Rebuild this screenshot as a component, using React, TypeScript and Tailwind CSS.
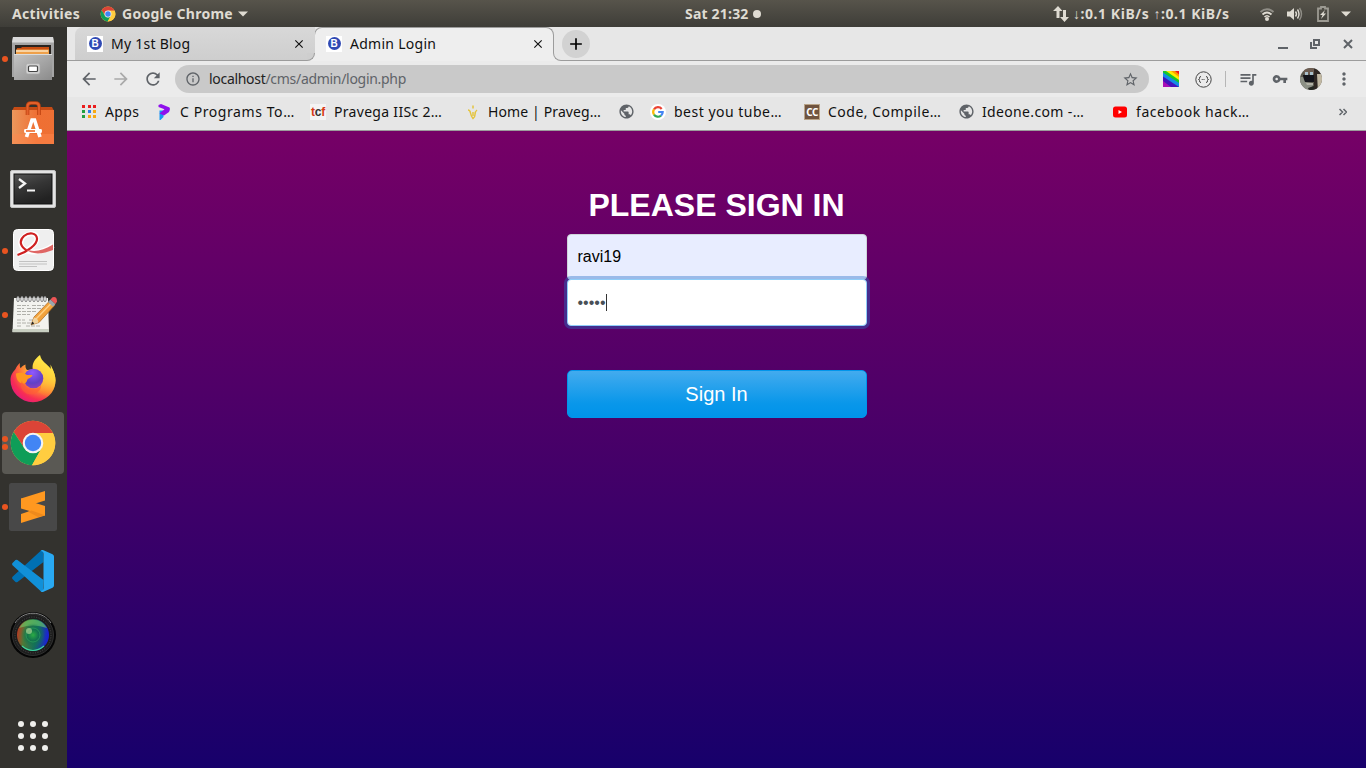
import React from "react";
import {
  MdArrowBack, MdArrowForward, MdRefresh, MdInfoOutline, MdStarBorder,
  MdQueueMusic, MdVpnKey, MdMoreVert, MdClose, MdAdd, MdPublic,
} from "react-icons/md";

const ui = "font-['Noto_Sans','Open_Sans',sans-serif]";

/* ---------- small shared drawings ---------- */

function ChromeLogo({ size }: { size: number }) {
  return (
    <svg width={size} height={size} viewBox="0 0 48 48" className="shrink-0">
      <circle cx="24" cy="24" r="22.3" fill="#ffcd40" />
      <path d="M4.700 12.900A22.300 22.300 0 0 1 43.300 12.900L44 14H24A10 10 0 0 0 15 28.500Z" fill="#db4437" />
      <path d="M4.700 12.900L15.300 29A10 10 0 0 0 32.700 29L23 46.300A22.300 22.300 0 0 1 4.700 12.900Z" fill="#0f9d58" />
      <path d="M24 14H43.900A22.300 22.300 0 0 1 23 46.300L32.700 29A10 10 0 0 0 24 14Z" fill="#ffcd40" />
      <circle cx="24" cy="24" r="10.3" fill="#f4f4f4" />
      <circle cx="24" cy="24" r="8.2" fill="#4285f4" />
    </svg>
  );
}

function BlogFavicon() {
  return (
    <span className="flex size-4 shrink-0 items-center justify-center bg-white">
      <span className="flex size-[13px] items-center justify-center rounded-full bg-[#304ab4] font-['Liberation_Sans',sans-serif] text-[10px] leading-none font-bold text-white">
        B
      </span>
    </span>
  );
}

function Globe() {
  return <MdPublic size={17} className="-mr-px shrink-0 text-[#5f6368]" />;
}

/* ---------- dock icons, each on a 48 × 48 canvas ---------- */

function FilesIcon() {
  return (
    <svg width="48" height="48" viewBox="0 0 48 48">
      <defs>
        <linearGradient id="fi" x2="1" y2="1"><stop stopColor="#c4c4c4" /><stop offset="1" stopColor="#8b8b8b" /></linearGradient>
      </defs>
      <path d="M4 2h40l1 6v34H3V8Z" fill="#a5a5a5" />
      <path d="M4 2h40l1 5.500H3Z" fill="#dadada" />
      <path d="M6 10h36v11H6Z" fill="#292420" />
      <path d="M8 13h4l1-1h27v8H7Z" fill="#c84e12" />
      <path d="M7 14.500h33V21H7Z" fill="#eea04a" />
      <path d="M7 16h32" stroke="#fff3dc" strokeWidth="1.200" />
      <path d="M5 19h38v26H5Z" fill="url(#fi)" />
      <path d="M5 19.500h38" stroke="#dcdcdc" />
      <rect x="17" y="28.500" width="14" height="10.500" rx="2" fill="#d0d0d0" stroke="#a8a8a8" strokeWidth=".6" />
      <rect x="19.500" y="31" width="9" height="5.500" rx="1" fill="#fff" stroke="#444" strokeWidth="1.200" />
    </svg>
  );
}

function SoftwareIcon() {
  return (
    <svg width="48" height="48" viewBox="0 0 48 48">
      <defs>
        <linearGradient id="sw" x2="1"><stop stopColor="#eb975c" /><stop offset=".6" stopColor="#ef6f33" /><stop offset="1" stopColor="#ee7034" /></linearGradient>
      </defs>
      <path d="M5 8h38l2 4H3Z" fill="#c54b15" />
      <path d="M3 11h42v34H3Z" fill="url(#sw)" />
      <path d="M3 35h42v10H3Z" fill="#ff8a50" opacity=".45" />
      <path d="M18.500 16V7.500Q18.500 4 22 4h4.500Q30 4 30 7.500V16" fill="none" stroke="#bd4210" strokeWidth="3.600" />
      <path d="M18.500 16V7.500Q18.500 4 22 4h4.500Q30 4 30 7.500V16" fill="none" stroke="#e3602a" strokeWidth="2" />
      <path d="M17.500 38 23 21h2.500L31 38M15.500 32h17" fill="none" stroke="#fff" strokeWidth="3.600" />
      <rect x="15" y="30" width="18" height="4" rx="2" fill="#fff" />
      <path d="M17 32h9" stroke="#ef7033" strokeWidth="1.700" />
    </svg>
  );
}

function TerminalIcon() {
  return (
    <svg width="48" height="48" viewBox="0 0 48 48">
      <defs>
        <linearGradient id="te" x2=".4" y2="1"><stop stopColor="#545454" /><stop offset=".5" stopColor="#353535" /><stop offset="1" stopColor="#222" /></linearGradient>
      </defs>
      <rect x="1.500" y="7.500" width="45" height="37" rx="1.500" fill="#e4e4e4" stroke="#c4c4c4" />
      <rect x="5" y="11" width="38" height="30" fill="url(#te)" stroke="#111" />
      <path d="m10 16 6 4.500-6 4.500" fill="none" stroke="#f4f4f4" strokeWidth="2.300" />
      <path d="M18 27.500h8" stroke="#f4f4f4" strokeWidth="2" />
    </svg>
  );
}

function PdfIcon() {
  return (
    <svg width="48" height="48" viewBox="0 0 48 48">
      <rect x="4.500" y="2.500" width="40" height="41" rx="4" fill="#efefef" stroke="#fff" />
      <path d="M9 27.500C18 24.500 28 17 28 11.500 28 6 20 5 15 9.500 9 15 12 22 20 24.500c8 1.500 17-1 24-6" fill="none" stroke="#fff" strokeWidth="5" />
      <path d="M8.500 28C18 25 28.500 17.500 28 11.500 27.500 5.500 20 5 15 9c-5.500 5-3.500 11 3 14.500" fill="none" stroke="#cf2020" strokeWidth="2.200" />
      <path d="M15.500 21.500c8 4.500 18 2.500 28.500-4v5.500c-10 4-21 5.500-28.500-1.500Z" fill="#dc5553" opacity=".9" />
      <path d="M10 34.500h28M10 37h28M10 39.500h18" stroke="#bcbcbc" strokeWidth=".9" />
    </svg>
  );
}

function NotesIcon() {
  return (
    <svg width="48" height="48" viewBox="0 0 48 48">
      <path d="M5 7h34l1 34H3.500Z" fill="#f3f3ef" />
      <path d="M3.500 38H40v3.300H3.500Z" fill="#c9cfc2" />
      {[9, 13, 17, 21, 25, 29, 33, 36].map((x) => (
        <ellipse key={x} cx={x} cy="8" rx="1.200" ry="2.800" fill="#fff" stroke="#777" strokeWidth=".9" />
      ))}
      <path d="M8 14.500h12M23 14.500h12M8 17.500h7M18 17.500h16M8 20.500h19M8 23.500h13M8 29h8M20 29h4M8 32h16M8 35h5M17 35h15" stroke="#b0b0aa" strokeWidth="1" strokeDasharray="4 1" />
      <path d="m22 34 3-8L41 9.500l5 4.500L30 31.500Z" fill="#f2a23c" stroke="#a7641c" strokeWidth=".7" />
      <path d="m27 28 16-16.500" stroke="#ffd085" strokeWidth="1.500" />
      <path d="m39 11 2.500-2.500 5 4.500-2.500 2.700Z" fill="#9ba5ad" />
      <path d="m41.500 8.500 2-2.200Q48 5 48 10.500L46.500 13Z" fill="#ee5556" />
      <path d="m22 34 3-7.500q4 .5 4.500 5Z" fill="#efd3a0" />
      <path d="m22 34 1.300-3.500 2 2Z" fill="#222" />
    </svg>
  );
}

function FirefoxIcon() {
  return (
    <svg width="48" height="48" viewBox="0 0 48 48">
      <defs>
        <radialGradient id="f1" cx=".82" cy=".15" r="1.050"><stop stopColor="#fff44f" /><stop offset=".33" stopColor="#ffc33c" /><stop offset=".57" stopColor="#ff7b35" /><stop offset=".78" stopColor="#f72d54" /><stop offset="1" stopColor="#e0128b" /></radialGradient>
        <radialGradient id="f2" cx=".45" cy=".2" r=".9"><stop stopColor="#9059ff" /><stop offset=".6" stopColor="#6141c6" /><stop offset="1" stopColor="#9d3fba" /></radialGradient>
        <linearGradient id="f3" x1=".6" x2=".3" y2="1"><stop stopColor="#fff04c" /><stop offset=".45" stopColor="#ffd23c" /><stop offset="1" stopColor="#ff8a2b" stopOpacity="0" /></linearGradient>
      </defs>
      <path d="M11 8c-.5 2.500-.2 4 .7 5.200 1.200-1.700 2.500-2.600 4.800-3.700-.2 2.500.1 3.800 1.500 5.500L40 13c1.800.8 2.400 2.300 3 3.800 0-2-.4-3-1-4.500 3 4 4.500 8.500 4.500 13A22.500 22 0 0 1 1.500 25C1.500 20 4 17 6.500 14 7.500 11.500 9 9.500 11 8Z" fill="url(#f1)" />
      <path d="M31 0c-5.500 4.200-8 8.500-7.300 14 9.500 2 12.500 9 9.500 16.500-1 2.500-3 4.500-5.500 6L38 42C46 37 48 27 45.500 19.500 44.700 16 43.500 13.500 41.500 9.500l.3 4.500C38 8 33 8 31 0Z" fill="url(#f3)" />
      <circle cx="24.500" cy="23.500" r="9.800" fill="url(#f2)" />
      <path d="M7 18.500c3.500-1.500 8-1 11 1.500h5.500c-.8 2.800-4.500 3.400-5 4.500-.7 1.500-.8 3-3 4C9.500 29 7 24 7 18.500Z" fill="#ff981f" />
      <path d="M13 25.500c1 8 13 12 19 5 0 8-10 11.500-16 7C12 34.500 10.500 30 13 25.500Z" fill="#ff5d36" opacity=".6" />
    </svg>
  );
}

function SublimeIcon() {
  return (
    <svg width="48" height="48" viewBox="0 0 48 48">
      <rect width="48" height="48" rx="2.500" fill="#484848" />
      <path d="M12 31 36 23v9.500L12 40Z" fill="#ff9820" />
      <path d="M12 15.500 36 8v9.500L12 25Z" fill="#ff9820" />
      <path d="M12 15.500 36 23v9.500L12 25.500Z" fill="#ff9820" />
      <path d="m19 28.700 3.500-1.200L36 32.300 29 34Z" fill="#ef8a1c" />
    </svg>
  );
}

function VsCodeIcon() {
  return (
    <svg width="48" height="48" viewBox="0 0 48 48">
      <path d="m34 3 .5 12L8.500 35q-1 .7-2 0L3.500 32q-1-1 0-2.200L31.500 4q1-1 2.500-1Z" fill="#0070b3" />
      <path d="m34 45 .5-12L8.500 13q-1-.7-2 0L3.500 16q-1 1 0 2.200L31.500 44q1 1 2.500 1Z" fill="#1190d8" />
      <path d="M31.500 44q3 0 3-3V7q0-3-3-3 1.500-1.500 3-.8l9 4Q45 8 45 9.500v29q0 1.500-1.500 2.300l-9 4q-1.500.8-3-.8Z" fill="#29a9f2" />
    </svg>
  );
}

function CameraIcon() {
  return (
    <svg width="48" height="48" viewBox="0 0 48 48">
      <defs>
        <linearGradient id="c1" x2="1" y2=".15"><stop stopColor="#d6281d" /><stop offset=".3" stopColor="#4c7a38" /><stop offset=".65" stopColor="#14705a" /><stop offset=".85" stopColor="#164a92" /><stop offset="1" stopColor="#1b24d0" /></linearGradient>
        <radialGradient id="c2"><stop stopColor="#2cae45" /><stop offset=".5" stopColor="#10704d" stopOpacity=".85" /><stop offset="1" stopColor="#137b54" stopOpacity="0" /></radialGradient>
      </defs>
      <circle cx="24" cy="24" r="23" fill="#050505" />
      <circle cx="24" cy="24" r="20.500" fill="#1d1d1d" stroke="#2f2f2f" />
      <path d="M6 12A21.500 21.500 0 0 1 42 12" fill="none" stroke="#888" strokeWidth="1" />
      <circle cx="24" cy="24" r="18" fill="none" stroke="#4a4a4a" strokeDasharray="1 1.500" />
      <circle cx="24" cy="24" r="16" fill="url(#c1)" />
      <path d="M10 17A16 16 0 0 1 38 17Q24 12 10 17" fill="#6fd06a" opacity=".6" />
      <circle cx="24" cy="24" r="12" fill="url(#c2)" />
      <circle cx="24" cy="24" r="7" fill="none" stroke="#39bd61" opacity=".45" />
      <circle cx="20" cy="20" r="3" fill="#c4e3a0" opacity=".6" />
      <path d="M13 35Q24 44 35 35" fill="none" stroke="#3ed3a0" strokeWidth="1.200" />
    </svg>
  );
}

function Dock() {
  const items: { icon: React.ReactNode; dots: number; active?: boolean }[] = [
    { icon: <FilesIcon />, dots: 1 },
    { icon: <SoftwareIcon />, dots: 0 },
    { icon: <TerminalIcon />, dots: 0 },
    { icon: <PdfIcon />, dots: 1 },
    { icon: <NotesIcon />, dots: 1 },
    { icon: <FirefoxIcon />, dots: 0 },
    { icon: <ChromeLogo size={48} />, dots: 2, active: true },
    { icon: <SublimeIcon />, dots: 1 },
    { icon: <VsCodeIcon />, dots: 0 },
    { icon: <CameraIcon />, dots: 0 },
  ];
  return (
    <nav className="flex w-[67px] shrink-0 flex-col bg-[#33322e]">
      {items.map((it, i) => (
        <div key={i} className="h-16 w-[66px] px-0.5 py-px">
          <div className={it.active ? "flex h-[62px] items-center rounded-[4px] bg-[#5a5954]" : "flex h-[62px] items-center"}>
            <div className="flex w-[7px] flex-col items-start gap-[2.500px]">
              {Array.from({ length: it.dots }, (_, d) => (
                <span key={d} className="size-[6px] rounded-full bg-[#e95420]" />
              ))}
            </div>
            {it.icon}
          </div>
        </div>
      ))}
      <div className="mt-auto grid h-16 w-[66px] grid-cols-3 place-content-center gap-[6px] px-[18px]">
        {Array.from({ length: 9 }, (_, d) => (
          <span key={d} className="size-[6px] rounded-full bg-[#efefec]" />
        ))}
      </div>
    </nav>
  );
}

function TopBar() {
  return (
    <header className={`flex h-[27px] shrink-0 items-center bg-linear-to-b/srgb from-[#57544b] to-[#3e3d38] text-[14px] font-bold text-[#dfdbd2] ${ui}`}>
      <span className="w-[88px] pl-3 tracking-[0.3px] whitespace-nowrap">Activities</span>
      <span className="flex w-[597px] items-center whitespace-nowrap">
        <span className="ml-3 flex"><ChromeLogo size={16} /></span>
        <span className="ml-[6px] tracking-[0.27px]">Google Chrome</span>
        <svg width="10" height="6" className="ml-[5px]"><path d="M0 .5h10L5 5.500Z" fill="#dfdbd2" /></svg>
      </span>
      <span className="flex w-[368px] items-center whitespace-nowrap">
        <span className="tracking-[0.2px]">Sat 21:32</span>
        <span className="ml-1 size-2 rounded-full bg-[#dfdbd2]" />
      </span>
      <svg width="16" height="16" viewBox="0 0 16 16" className="shrink-0">
        <path d="M5 0 9.500 5H6.500v7H3.500V5H0ZM11.500 16l4.500-5h-3V4h-3v7H7Z" fill="#dfdbd2" />
      </svg>
      <span className="ml-[4px] w-[186px] tracking-[0.55px] whitespace-nowrap">↓:0.1 KiB/s ↑:0.1 KiB/s</span>
      <svg width="16" height="16" viewBox="0 0 16 16" fill="none" className="shrink-0">
        <path d="M1.500 6Q8 .5 14.500 6" stroke="#8f8d86" strokeWidth="2" />
        <path d="M3.500 8.500Q8 4.500 12.500 8.500" stroke="#dfdbd2" strokeWidth="1.800" />
        <path d="M5.500 11Q8 8.500 10.500 11" stroke="#dfdbd2" strokeWidth="1.600" />
        <circle cx="8" cy="13" r="2" fill="#dfdbd2" />
      </svg>
      <svg width="16" height="16" viewBox="0 0 16 16" fill="none" className="ml-[12px] shrink-0">
        <path d="M0 5.500h3L7 2v12l-4-3.500H0Z" fill="#dfdbd2" />
        <path d="M8.500 5.500Q10.500 8 8.500 10.500M10.500 3.500Q13.500 8 10.500 12.500" stroke="#dfdbd2" strokeWidth="1.400" />
        <path d="M12.500 2Q16.500 8 12.500 14" stroke="#8f8d86" strokeWidth="1.400" />
      </svg>
      <svg width="12" height="16" viewBox="0 0 12 16" className="ml-[14px] shrink-0">
        <path d="M4 1.500V1h4v1.500h3V15H1V2.500h3Z" fill="none" stroke="#9c9a92" strokeWidth="1.800" />
        <path d="M8 4 3 9h2.500L4 13l5-5.500H6.500Z" fill="#dfdbd2" />
      </svg>
      <svg width="10" height="6" className="ml-[12px] shrink-0"><path d="M0 .5h10L5 5.500Z" fill="#dfdbd2" /></svg>
    </header>
  );
}

function TabStrip() {
  return (
    <div className={`flex h-[34px] shrink-0 bg-[#e7e7e7] text-[14px] text-[#111] ${ui}`}>
      <div className="w-2 shrink-0 border-b border-[#9c9c9c]" />
      <div className="flex w-[232px] items-center rounded-tl-lg border-b border-[#9c9c9c] bg-linear-to-b from-[#d8d8d8] to-[#cecece] pl-3">
        <BlogFavicon />
        <span className="ml-2 w-[181px] shrink-0 tracking-[0.25px] whitespace-nowrap">My 1st Blog</span>
        <MdClose size={14} className="shrink-0" />
      </div>
      <div className="z-10 -mr-px flex w-2 flex-col justify-between bg-linear-to-b from-[#d8d8d8] to-[#cecece]">
        <span />
        <span className="h-2 bg-[#eee]">
          <span className="block h-2 rounded-br-lg border-r border-b border-[#9c9c9c] bg-[#cecece]" />
        </span>
      </div>
      <div className="flex w-[240px] items-center rounded-t-lg border border-b-0 border-[#9c9c9c] bg-[#eee] pb-0.5 pl-[11px]">
        <BlogFavicon />
        <span className="ml-2 w-[181px] shrink-0 tracking-[0.27px] whitespace-nowrap">Admin Login</span>
        <MdClose size={14} className="shrink-0" />
      </div>
      <div className="z-10 -ml-px flex w-2 flex-col justify-end">
        <span className="h-2 bg-[#eee]">
          <span className="block h-2 rounded-bl-lg border-b border-l border-[#9c9c9c] bg-[#e7e7e7]" />
        </span>
      </div>
      <div className="flex flex-1 items-center border-b border-[#9c9c9c] text-[#5f6368]">
        <span className="ml-px flex size-7 items-center justify-center rounded-full bg-[#d2d2d2] text-black">
          <MdAdd size={20} />
        </span>
        <svg width="76" height="14" viewBox="0 0 76 14" fill="none" stroke="#5f6368" className="mr-3 ml-auto">
          <path d="M0 11h10" strokeWidth="2" />
          <path d="M36 3h5v5h-5ZM33 5v6h6" strokeWidth="2" />
          <path d="m66 3 8 8m0-8-8 8" strokeWidth="2" />
        </svg>
      </div>
    </div>
  );
}

function AddressBar() {
  return (
    <div className={`flex h-9 shrink-0 items-center bg-[#ebebeb] text-[#5f6368] ${ui}`}>
      <MdArrowBack size={20} className="ml-3" />
      <MdArrowForward size={20} className="ml-[12px] text-[#a9a9a9]" />
      <MdRefresh size={20} className="ml-[12px]" />
      <div className="ml-[12px] flex h-7 w-[974px] items-center rounded-full bg-[#c9c9c9] px-[10px]">
        <MdInfoOutline size={16} />
        <span className="ml-2 pb-0.5 text-[14px] tracking-[-0.3px] whitespace-nowrap">
          <span className="text-[#222]">localhost</span>/cms/admin/login.php
        </span>
        <MdStarBorder size={17} className="ml-auto" />
      </div>
      <svg width="16" height="16" viewBox="0 0 16 16" className="ml-[14px]">
        <path d="M0 0h16v16H0Z" fill="#f01818" />
        <path d="M0 0h12l4 3.500V16H0Z" fill="#ff9b00" />
        <path d="M0 0h8l8 6v10H0Z" fill="#ffed00" />
        <path d="M0 0h3l13 9v7H0Z" fill="#19c62a" />
        <path d="m0 1.500 16 10.500v4H0Z" fill="#138be8" />
        <path d="m0 5.500 16 10.500H0Z" fill="#4412bd" />
        <path d="m0 10 8 6H0Z" fill="#a80eb6" />
      </svg>
      <svg width="17" height="17" viewBox="0 0 17 17" fill="none" stroke="#444" className="ml-4">
        <circle cx="8.500" cy="8.500" r="7.700" />
        <path d="M6 5.500q-1.500 0-1.500 1.500v.5q0 1-1 1 1 0 1 1v.5q0 1.500 1.500 1.500M11 5.500q1.500 0 1.500 1.500v.5q0 1 1 1-1 0-1 1v.5q0 1.500-1.500 1.500M6.700 8.500h1m.8 0h1" />
      </svg>
      <span className="ml-[13px] h-4 w-px bg-[#b6b6b6]" />
      <MdQueueMusic size={20} className="ml-3" />
      <MdVpnKey size={16} className="ml-[14px]" />
      <svg width="22" height="22" viewBox="0 0 22 22" className="ml-3">
        <clipPath id="av"><circle cx="11" cy="11" r="11" /></clipPath>
        <g clipPath="url(#av)">
          <path d="M0 0h22v22H0Z" fill="#59574d" />
          <path d="M4 0h10v6H4Z" fill="#6d5d52" />
          <path d="M5 4h3v3H5ZM10 4h3v3h-3Z" fill="#a9c0cb" />
          <path d="M3 7h11v7H4Z" fill="#14151b" />
          <path d="M14 0h8v7h-5v15h-3Z" fill="#2f2723" />
          <path d="M17 6h5v13h-4Z" fill="#c2b9a4" />
          <path d="M0 9h3l2 5 7 1 1 3-7 4H0Z" fill="#8c9085" />
          <path d="M6 15h7v2H7Z" fill="#b3b3a8" />
          <path d="m8 20 6-2v4H9Z" fill="#242722" />
        </g>
      </svg>
      <MdMoreVert size={20} className="ml-3" />
    </div>
  );
}

function Bookmark({ icon, label, className }: { icon: React.ReactNode; label?: string; className: string }) {
  return (
    <div className={`flex shrink-0 items-center gap-2 whitespace-nowrap ${className}`}>
      {icon}
      {label && <span>{label}</span>}
    </div>
  );
}

const appColours = ["#ea1d1d", "#ea1d1d", "#ea1d1d", "#22a041", "#2b7de9", "#f7a912", "#22a041", "#f7a912", "#f7a912"];

function BookmarksBar() {
  return (
    <div className={`flex h-[34px] shrink-0 items-center border-b border-[#9c9c9c] bg-[#e6e6e6] pb-1 pl-[14px] text-[14px] text-[#111] ${ui}`}>
      <Bookmark
        className="w-[75px] tracking-[0.4px]"
        label="Apps"
        icon={
          <span className="grid size-4 grid-cols-3 place-content-center gap-[2px] pl-px">
            {appColours.map((c, i) => <span key={i} className="size-[3px]" style={{ background: c }} />)}
          </span>
        }
      />
      <Bookmark
        className="w-[154px] tracking-[0.58px]"
        label="C Programs To…"
        icon={
          <svg width="16" height="16" viewBox="0 0 16 16">
            <path d="M3.500 6.500h4V13l-3 3h-1Z" fill="#1597f4" />
            <path d="M2.500 1 5 0l8.500 3.500Q14.500 4.500 13 8L8 11.500 3.500 9.500l5-4.200L2.500 3Z" fill="#8f10ec" />
          </svg>
        }
      />
      <Bookmark
        className="w-[154px] tracking-[0.3px]"
        label="Pravega IISc 2…"
        icon={
          <span className="flex size-4 items-center justify-center bg-[#f4f4f4] font-['Liberation_Sans',sans-serif] text-[12px] leading-none font-bold tracking-[-0.2px] text-[#d83a16]">
            t<span className="text-[#333]">c</span>f
          </span>
        }
      />
      <Bookmark
        className="w-[154px] tracking-[0.12px]"
        label="Home | Praveg…"
        icon={
          <svg width="16" height="16" viewBox="0 0 16 16" fill="none" stroke="#e4c440" strokeWidth="1.500">
            <path d="M4 6q2 0 2.500 3T9 14.500q2-1 2-4T13 6M9 8v4M9 1.500v3" />
          </svg>
        }
      />
      <Bookmark className="w-8" icon={<Globe />} />
      <Bookmark
        className="w-[154px] tracking-[0.5px]"
        label="best you tube…"
        icon={
          <svg width="16" height="16" viewBox="0 0 16 16" fill="none" strokeWidth="2.200">
            <circle cx="8" cy="8" r="8" fill="#fff" />
            <path d="M11.700 5A4.700 4.700 0 0 0 4 5.400" stroke="#ea4335" />
            <path d="M4 5.400A4.700 4.700 0 0 0 4 10.600" stroke="#fbbc05" />
            <path d="M4 10.600A4.700 4.700 0 0 0 11 11.600" stroke="#34a853" />
            <path d="M11 11.600A4.700 4.700 0 0 0 12.700 8H8.200" stroke="#4285f4" />
          </svg>
        }
      />
      <Bookmark
        className="w-[154px] tracking-[0.5px]"
        label="Code, Compile…"
        icon={
          <span className="flex size-4 items-center justify-center border border-[#b9a488] bg-[#70543f] font-['Noto_Sans',sans-serif] text-[10px] leading-none font-bold tracking-[-0.5px] text-white">
            CC
          </span>
        }
      />
      <Bookmark className="w-[154px] tracking-[0.35px]" label="Ideone.com -…" icon={<Globe />} />
      <Bookmark
        className="w-[154px] tracking-[0.57px]"
        label="facebook hack…"
        icon={
          <svg width="16" height="16" viewBox="0 0 16 16">
            <rect x="1" y="2.500" width="14" height="11" rx="2.500" fill="#f00" />
            <path d="M6.500 6v4l3.500-2Z" fill="#fff" />
          </svg>
        }
      />
      <svg width="8" height="8" viewBox="0 0 8 8" fill="none" stroke="#5f6368" strokeWidth="1.500" className="mr-[19px] ml-auto">
        <path d="m.5 1 3 3-3 3M4.500 1l3 3-3 3" />
      </svg>
    </div>
  );
}

function LoginPage() {
  return (
    <main className="flex flex-1 flex-col items-center bg-linear-to-b/srgb from-[#760066] to-[#17006b] pt-[55px] font-['Liberation_Sans',sans-serif]">
      <form className="flex w-[300px] flex-col">
        <h1 className="mb-[10px] text-center text-[32px] leading-[38px] font-bold whitespace-nowrap text-white">PLEASE SIGN IN</h1>
        <div className="h-[46px] rounded-[4px] border border-[#ced4da] bg-[#e8edff] pl-[10px] text-[16px] leading-[43px] text-black">
          ravi19
        </div>
        <div className="-mt-px flex h-[47px] items-center rounded-[4px] border border-[#8fcdf8] bg-white pl-[10px] text-[16px] text-[#495057] shadow-[0_0_0_3px_rgba(38,110,200,0.4)]">
          <span>•••••</span>
          <span className="h-[17px] w-px bg-[#333]" />
        </div>
        <button type="button" className="mt-[44px] h-12 rounded-[5px] border border-[#0095eb] bg-linear-to-b/srgb from-[#43abee] via-[#0997ea] via-70% to-[#0093ea] text-[20px] text-white">
          Sign In
        </button>
      </form>
    </main>
  );
}

export default function App() {
  return (
    <div className="flex h-[768px] w-[1366px] flex-col overflow-hidden">
      <TopBar />
      <div className="flex min-h-0 flex-1">
        <Dock />
        <div className="flex min-w-0 flex-1 flex-col">
          <TabStrip />
          <AddressBar />
          <BookmarksBar />
          <LoginPage />
        </div>
      </div>
    </div>
  );
}
